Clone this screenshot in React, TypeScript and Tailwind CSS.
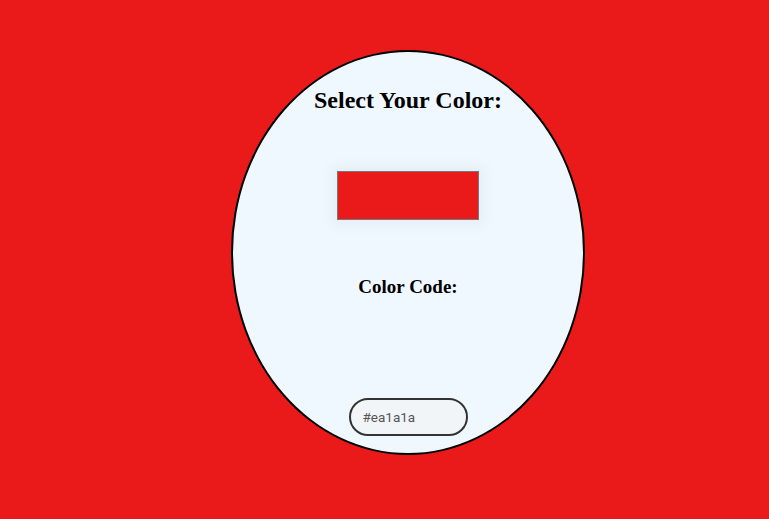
export default function App() {
  return (
    <div className="min-h-[519px] w-full bg-[#ea1a1a] pt-[50px] pl-[231px] font-[family-name:Liberation_Serif,serif]">
      <div className="flex h-[405px] w-[354px] flex-col items-center rounded-[50%] border-2 border-black bg-[#f0f8ff]">
        <h1 className="mt-[33px] text-[24px] font-bold leading-[30px] text-black">Select Your Color:</h1>
        <div className="mt-[56px] h-[49px] w-[142px] border border-[#777] bg-[#ea1a1a] shadow-[0_0_12px_6px_rgba(0,0,0,0.04)]" />
        <h2 className="mt-[55px] text-[19px] font-bold leading-[24px] text-black">Color Code:</h2>
        <div className="mt-[99px] flex h-[38px] w-[119px] items-center rounded-full border-2 border-[#333] bg-[#f2f5f8] pl-[12px] font-['Roboto',sans-serif] text-[13.5px] text-[#555]">
          #ea1a1a
        </div>
      </div>
    </div>
  );
}
